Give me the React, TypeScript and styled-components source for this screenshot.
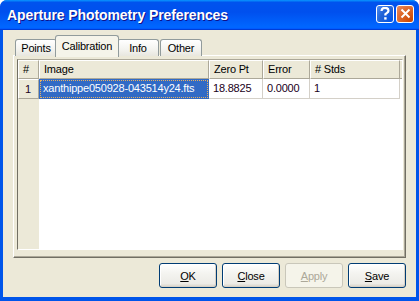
import styled, { createGlobalStyle } from "styled-components";

const GlobalStyle = createGlobalStyle`
  html, body {
    margin: 0;
    padding: 0;
    background: #ffffff;
  }
  body {
    font-family: "Liberation Sans", Arial, sans-serif;
    font-size: 11px;
  }
`;

const columns = [
  { key: "image", title: "Image", width: 170 },
  { key: "zero", title: "Zero Pt", width: 54 },
  { key: "error", title: "Error", width: 47 },
  { key: "stds", title: "# Stds", width: 90 },
];

const rows = [
  { image: "xanthippe050928-043514y24.fts", zero: "18.8825", error: "0.0000", stds: "1" },
];

const tabs = [
  { label: "Points", width: 42 },
  { label: "Calibration", width: 60 },
  { label: "Info", width: 42 },
  { label: "Other", width: 42, gap: 1 },
];
const ACTIVE_TAB = "Calibration";

export default function App() {
  return (
    <>
      <GlobalStyle />
      <Window>
        <TitleBar>
          <Title>Aperture Photometry Preferences</Title>
          <TitleButtons>
            <CaptionButton>
              <svg width="10" height="13" viewBox="0 0 10 13">
                <path
                  d="M1.5 4 C1.5 1.5 3 0.8 5 0.8 C7.2 0.8 8.5 2 8.5 3.8 C8.5 5.6 6.2 6 5.4 7.2 L5.4 8.6"
                  fill="none"
                  stroke="#fff"
                  strokeWidth="2.2"
                />
                <rect x="4.2" y="10.2" width="2.4" height="2.4" fill="#fff" />
              </svg>
            </CaptionButton>
            <CaptionButton $close>
              <svg width="11" height="11" viewBox="0 0 11 11">
                <path d="M1.5 1.5 L9.5 9.5 M9.5 1.5 L1.5 9.5" stroke="#fff" strokeWidth="2" />
              </svg>
            </CaptionButton>
          </TitleButtons>
        </TitleBar>
        <Body>
          <TabStrip>
            {tabs.map((t) => (
              <Tab
                key={t.label}
                $active={t.label === ACTIVE_TAB}
                $width={t.width}
                $gap={t.gap ?? 0}
              >
                {t.label}
              </Tab>
            ))}
          </TabStrip>
          <Panel>
            <ScrollPane>
              <HeaderRow>
                <HeaderCell $width={21}>#</HeaderCell>
                {columns.map((c) => (
                  <HeaderCell key={c.key} $width={c.width}>
                    {c.title}
                  </HeaderCell>
                ))}
                <HeaderFiller />
              </HeaderRow>
              <TableBody>
                <RowHeaderColumn>
                  {rows.map((_, i) => (
                    <RowHeaderCell key={i}>{i + 1}</RowHeaderCell>
                  ))}
                </RowHeaderColumn>
                <Viewport>
                  {rows.map((r, i) => (
                    <DataRow key={i}>
                      {columns.map((c, ci) => (
                        <DataCell key={c.key} $width={c.width} $selected={ci === 0}>
                          {r[c.key as keyof typeof r]}
                        </DataCell>
                      ))}
                    </DataRow>
                  ))}
                </Viewport>
              </TableBody>
            </ScrollPane>
          </Panel>
          <ButtonRow>
            <Button>
              <u>O</u>K
            </Button>
            <Button>
              <u>C</u>lose
            </Button>
            <Button disabled>
              <u>A</u>pply
            </Button>
            <Button>
              <u>S</u>ave
            </Button>
          </ButtonRow>
        </Body>
      </Window>
    </>
  );
}

const Window = styled.div`
  width: 419px;
  height: 301px;
  display: flex;
  flex-direction: column;
  border-radius: 7px 7px 0 0;
  overflow: hidden;
  background: #0055ea;
  box-sizing: border-box;
`;

const TitleBar = styled.div`
  height: 30px;
  flex: 0 0 30px;
  display: flex;
  align-items: center;
  justify-content: space-between;
  padding: 0 5px 0 7px;
  background: linear-gradient(
    180deg,
    #0997ff,
    #0053ee 8%,
    #0050ee 40%,
    #0066ff 88%,
    #0066ff 93%,
    #005bff 95%,
    #003dd7 96%,
    #003dd7
  );
`;

const Title = styled.span`
  font-family: "Liberation Sans", Arial, sans-serif;
  font-weight: bold;
  font-size: 14px;
  letter-spacing: -0.1px;
  color: #ffffff;
  text-shadow: 1px 1px #0f1089;
  margin-top: -1px;
`;

const TitleButtons = styled.div`
  display: flex;
  gap: 2px;
  margin-top: -3px;
`;

const CaptionButton = styled.div<{ $close?: boolean }>`
  width: 18px;
  height: 18px;
  box-sizing: border-box;
  border: 1px solid #ffffff;
  border-radius: 3px;
  display: flex;
  align-items: center;
  justify-content: center;
  background: ${(p) =>
    p.$close
      ? "radial-gradient(circle at 90% 90%, #cc4600 0%, #dc6527 55%, #e98d63 100%)"
      : "radial-gradient(circle at 90% 90%, #0054e9 0%, #2263d5 55%, #4d8ff7 100%)"};
`;

const Body = styled.div`
  flex: 1;
  display: flex;
  flex-direction: column;
  margin: 0 3px 4px 3px;
  padding: 5px 10px 8px 10px;
  background: #ece9d8;
  letter-spacing: -0.2px;
`;

const TabStrip = styled.div`
  height: 21px;
  display: flex;
  align-items: flex-start;
  padding-left: 2px;
  position: relative;
  z-index: 1;
`;

const Tab = styled.div<{ $active?: boolean; $width: number; $gap: number }>`
  box-sizing: border-box;
  flex: 0 0 auto;
  width: ${(p) => (p.$active ? p.$width + 4 : p.$width)}px;
  height: ${(p) => (p.$active ? "22px" : "17px")};
  margin-top: ${(p) => (p.$active ? "0" : "4px")};
  margin-left: ${(p) => (p.$active ? -2 : p.$gap)}px;
  margin-right: ${(p) => (p.$active ? "-2px" : "0")};
  padding-top: ${(p) => (p.$active ? "3px" : "1px")};
  text-align: center;
  border: 1px solid #919b9c;
  border-bottom: none;
  border-radius: 3px 3px 0 0;
  background: ${(p) =>
    p.$active ? "#f5f4ea" : "linear-gradient(180deg, #ffffff 0%, #f3f3ef 60%, #e8e7df 100%)"};
  color: #000000;
  font-size: 11px;
  line-height: 14px;
  white-space: nowrap;
  position: relative;
  z-index: ${(p) => (p.$active ? 2 : 1)};
`;

const Panel = styled.div`
  height: 203px;
  box-sizing: border-box;
  border-top: 1px solid #ffffff;
  border-left: 1px solid #ffffff;
  border-right: 1px solid #716f64;
  border-bottom: 1px solid #716f64;
  box-shadow: inset -1px -1px #aca899;
  padding: 3px 2px 7px 3px;
  margin-top: -1px;
`;

const ScrollPane = styled.div`
  height: 191px;
  display: flex;
  flex-direction: column;
  box-sizing: border-box;
  border-top: 1px solid #aca899;
  border-left: 1px solid #716f64;
  border-right: 1px solid #ffffff;
  border-bottom: 1px solid #ffffff;
  background: #ffffff;
`;

const HeaderRow = styled.div`
  height: 19px;
  flex: 0 0 19px;
  display: flex;
  background: #ece9d8;
`;

const HeaderCell = styled.div<{ $width: number }>`
  width: ${(p) => p.$width}px;
  flex: 0 0 ${(p) => p.$width}px;
  box-sizing: border-box;
  border-top: 1px solid #ffffff;
  border-left: 1px solid #ffffff;
  border-right: 1px solid #aca899;
  border-bottom: 1px solid #aca899;
  padding-left: 4px;
  line-height: 17px;
  color: #000000;
  white-space: nowrap;
  overflow: hidden;
`;

const HeaderFiller = styled.div`
  flex: 1;
  border-bottom: 1px solid #aca899;
  border-top: 1px solid #ffffff;
`;

const TableBody = styled.div`
  flex: 1;
  display: flex;
`;

const RowHeaderColumn = styled.div`
  width: 21px;
  flex: 0 0 21px;
  background: #ece9d8;
`;

const RowHeaderCell = styled.div`
  height: 20px;
  box-sizing: border-box;
  border-top: 1px solid #ffffff;
  border-left: 1px solid #ffffff;
  border-right: 1px solid #aca899;
  border-bottom: 1px solid #aca899;
  padding-left: 6px;
  line-height: 18px;
  color: #1a0020;
`;

const Viewport = styled.div`
  flex: 1;
  background: #ffffff;
`;

const DataRow = styled.div`
  height: 20px;
  display: flex;
`;

const DataCell = styled.div<{ $width: number; $selected?: boolean }>`
  width: ${(p) => p.$width}px;
  flex: 0 0 ${(p) => p.$width}px;
  box-sizing: border-box;
  border-right: 1px solid #d4d0c8;
  border-bottom: 1px solid #d4d0c8;
  padding-left: ${(p) => (p.$selected ? "3px" : "4px")};
  line-height: ${(p) => (p.$selected ? "17px" : "19px")};
  white-space: nowrap;
  overflow: hidden;
  color: ${(p) => (p.$selected ? "#ffffff" : "#1a0020")};
  background: ${(p) => (p.$selected ? "#316ac5" : "#ffffff")};
  outline: ${(p) => (p.$selected ? "1px dotted #e8b060" : "none")};
  outline-offset: -2px;
  ${(p) => p.$selected && "border: 1px solid #316ac5;"}
`;

const ButtonRow = styled.div`
  display: flex;
  justify-content: flex-end;
  gap: 5px;
  margin-top: 5px;
`;

const Button = styled.button`
  width: 58px;
  height: 25px;
  box-sizing: border-box;
  padding: 0;
  border: 1px solid #003c74;
  border-radius: 3px;
  background: linear-gradient(180deg, #ffffff 0%, #f4f4f0 40%, #ecebe6 85%, #d6d0c5 100%);
  box-shadow: inset -1px -1px #d6d0c5, inset 1px 1px #ffffff;
  font-family: "Liberation Sans", Arial, sans-serif;
  font-size: 11px;
  letter-spacing: -0.2px;
  color: #000000;

  &:disabled {
    color: #aca899;
    border-color: #c9c7ba;
    background: #f5f4ea;
    box-shadow: none;
  }
`;
